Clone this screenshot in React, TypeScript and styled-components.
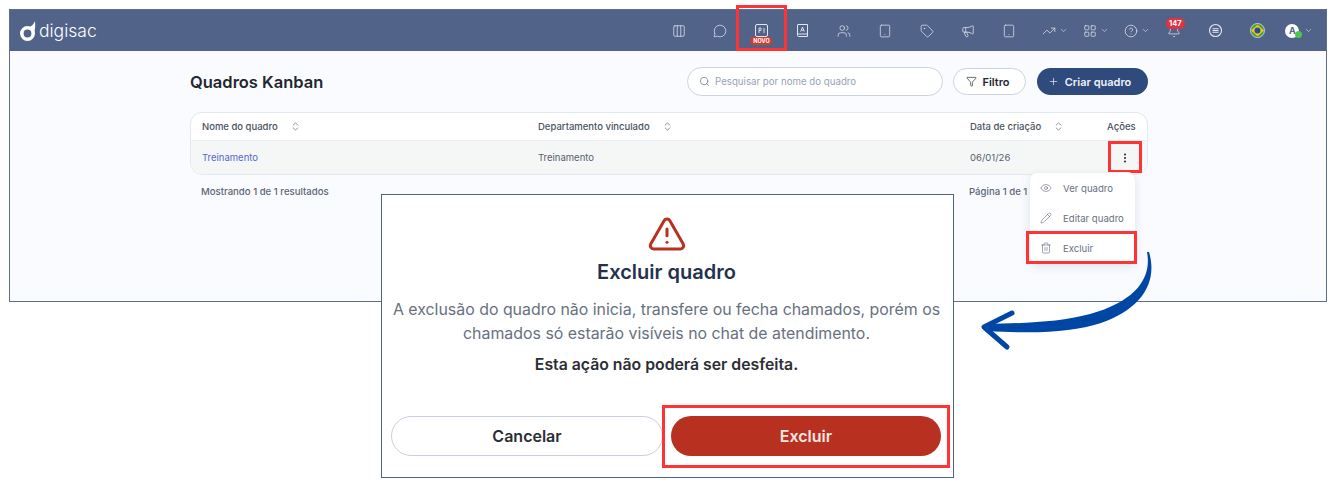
import React from 'react';
import styled, { createGlobalStyle } from 'styled-components';
import {
  Bell,
  ChevronDown,
  ChevronsUpDown,
  CircleHelp,
  Columns3,
  Eye,
  Filter,
  LayoutGrid,
  Megaphone,
  MessageCircle,
  Pencil,
  Plus,
  Search,
  Tablet,
  Tag,
  Trash2,
  TrendingUp,
  TriangleAlert,
  Users,
} from 'lucide-react';

const GlobalStyle = createGlobalStyle`
  html, body {
    margin: 0;
    padding: 0;
    background: #fff;
    font-family: Inter, "Liberation Sans", sans-serif;
  }
  * { box-sizing: border-box; }
`;

const Page = styled.div`
  position: relative;
  width: 1335px;
  height: 487px;
  padding: 9px 9px 0;
  overflow: hidden;
`;

const Frame = styled.div`
  width: 1318px;
  height: 293px;
  border: 1px solid #5d6c90;
  background: #f9fbff;
`;

// header
const Header = styled.header`
  height: 41px;
  background: #52638a;
  display: flex;
  align-items: center;
  padding: 0 7px 0 8px;
  color: #e3e7f0;
`;

const Logo = styled.div`
  display: flex;
  align-items: center;
  gap: 1px;
  color: #fff;
  padding-top: 1px;
`;

const LogoText = styled.span`
  font-size: 17.5px;
  font-weight: 300;
  line-height: 24px;
`;

const Nav = styled.nav`
  margin-left: auto;
  display: flex;
  align-items: center;
`;

const NavItem = styled.div`
  position: relative;
  width: 41.3px;
  height: 41px;
  display: flex;
  align-items: center;
  justify-content: center;
  gap: 3px;
`;

const NavChevron = styled(ChevronDown)`
  width: 9px;
  height: 9px;
  opacity: 0.8;
  margin-right: -8px;
`;

const NewBadge = styled.span`
  position: absolute;
  left: 50%;
  top: 27px;
  transform: translateX(-50%);
  width: 22px;
  height: 8px;
  border-radius: 4px;
  background: #d43b2c;
  color: #fff;
  font-size: 5.5px;
  font-weight: 700;
  line-height: 8px;
  text-align: center;
`;

const CountBadge = styled.span`
  position: absolute;
  left: 12px;
  top: 8px;
  width: 19px;
  height: 11px;
  border-radius: 6px;
  background: #e1323f;
  color: #fff;
  font-size: 7.5px;
  font-weight: 700;
  line-height: 11px;
  text-align: center;
`;

const NavHighlight = styled.div`
  position: absolute;
  left: -5px;
  right: -5px;
  top: -5px;
  bottom: 0;
  border: 3px solid #ff3333;
`;

const Avatar = styled.span`
  position: relative;
  width: 14px;
  height: 14px;
  border-radius: 50%;
  background: #fff;
  color: #52638a;
  font-size: 9px;
  font-weight: 700;
  line-height: 14px;
  text-align: center;
  margin: 0 2px 0 -6px;
`;

const OnlineDot = styled.span`
  position: absolute;
  left: 9.5px;
  top: 7.5px;
  width: 7px;
  height: 7px;
  border-radius: 50%;
  background: #4cc94c;
`;

// content
const Content = styled.main`
  width: 958px;
  margin-left: 180px;
  padding-top: 16px;
`;

const TopRow = styled.div`
  height: 29px;
  display: flex;
  align-items: center;
`;

const Title = styled.h1`
  margin: 0 auto 0 0;
  font-size: 16.5px;
  font-weight: 600;
  color: #22272f;
`;

const SearchBox = styled.div`
  width: 256px;
  height: 29px;
  border: 1px solid #ccd3de;
  border-radius: 15px;
  background: #fff;
  display: flex;
  align-items: center;
  gap: 5px;
  padding: 0 11px;
  color: #667085;
  font-size: 9.7px;
  margin-right: 10px;
`;

const Placeholder = styled.span`
  color: #98a2b3;
`;

const OutlineButton = styled.div`
  width: 73px;
  height: 27px;
  border: 1px solid #ccd3de;
  border-radius: 14px;
  background: #fff;
  display: flex;
  align-items: center;
  justify-content: center;
  gap: 5px;
  padding-right: 3px;
  color: #22272f;
  font-size: 11px;
  font-weight: 600;
  margin-right: 11px;
`;

const PrimaryButton = styled.div`
  width: 111px;
  height: 27px;
  border-radius: 14px;
  background: #2f4a7d;
  display: flex;
  align-items: center;
  justify-content: center;
  gap: 6px;
  padding-right: 6px;
  color: #eef1f7;
  font-size: 11px;
  font-weight: 600;
`;

const TableCard = styled.div`
  position: relative;
  margin-top: 16px;
  border: 1px solid #e3e7ee;
  border-radius: 12px;
  background: #fff;
`;

const TableRow = styled.div<{ $body?: boolean }>`
  display: grid;
  grid-template-columns: 336px 432px 137px 1fr;
  align-items: center;
  padding-left: 11px;
  height: ${p => (p.$body ? '34px' : '27px')};
  color: #566070;
  font-size: 9.5px;
  font-weight: ${p => (p.$body ? 400 : 500)};
  background: ${p => (p.$body ? '#f5f7f6' : 'transparent')};
  border-top: ${p => (p.$body ? '1px solid #e9edf0' : 'none')};
  border-radius: ${p => (p.$body ? '0 0 12px 12px' : '0')};
`;

const HeadCell = styled.div`
  display: flex;
  align-items: center;
  gap: 12px;
  color: #4a5260;
`;

const SortIcon = styled(ChevronsUpDown)`
  width: 11px;
  height: 11px;
  color: #7d8794;
`;

const LinkText = styled.span`
  color: #5269cf;
`;

const ActionCell = styled.div`
  position: relative;
  display: flex;
  justify-content: center;
  padding-right: 4px;
  color: #2a2f38;
`;

const KebabDots = styled.svg`
  width: 12px;
  height: 12px;
`;

const KebabHighlight = styled.div`
  position: absolute;
  left: 1px;
  top: -11px;
  width: 34px;
  height: 32px;
  border: 3px solid #ff3333;
`;

const Menu = styled.div`
  position: absolute;
  left: 838px;
  top: 59px;
  width: 107px;
  height: 91px;
  background: #fff;
  border-radius: 8px;
  border: 1px solid #eef0f4;
  box-shadow: 0 4px 10px rgba(60, 75, 110, 0.12);
  z-index: 2;
`;

const MenuItem = styled.div`
  position: relative;
  height: 30px;
  display: flex;
  align-items: center;
  gap: 11px;
  padding-left: 10px;
  color: #687180;
  font-size: 9.6px;
`;

const MenuHighlight = styled.div`
  position: absolute;
  left: -4px;
  right: -2px;
  top: -2px;
  height: 33px;
  border: 3px solid #ff3333;
`;

const Footer = styled.div`
  display: grid;
  grid-template-columns: 768px 1fr;
  padding: 11px 11px 0;
  color: #5d6675;
  font-size: 9.6px;
  font-weight: 500;
`;

// modal
const Modal = styled.section`
  position: absolute;
  left: 381px;
  top: 194px;
  width: 573px;
  height: 284px;
  background: #fff;
  border: 1px solid #52638a;
  padding: 19px 11px 0 9px;
  display: flex;
  flex-direction: column;
  align-items: center;
  z-index: 3;
`;

const AlertIcon = styled(TriangleAlert)`
  width: 40px;
  height: 40px;
  color: #b83020;
`;

const ModalTitle = styled.h2`
  margin: 4px 0 0;
  font-size: 20px;
  line-height: 28px;
  font-weight: 600;
  color: #25304d;
`;

const ModalText = styled.p`
  margin: 12px 0 0;
  width: 100%;
  font-size: 15.9px;
  line-height: 24px;
  text-align: center;
  color: #687180;
`;

const ModalWarning = styled.p`
  margin: 7px 0 0;
  font-size: 15.8px;
  line-height: 24px;
  font-weight: 600;
  color: #2b2e35;
`;

const ModalActions = styled.div`
  margin-top: auto;
  margin-bottom: 21px;
  width: 100%;
  display: grid;
  grid-template-columns: 272px 270px;
  column-gap: 8px;
`;

const CancelButton = styled.div`
  height: 40px;
  border: 1px solid #c9d0e0;
  border-radius: 20px;
  display: flex;
  align-items: center;
  justify-content: center;
  font-size: 16px;
  font-weight: 600;
  color: #2b2e35;
`;

const DangerButton = styled.div`
  position: relative;
  height: 40px;
  border-radius: 20px;
  background: #b83020;
  display: flex;
  align-items: center;
  justify-content: center;
  font-size: 16px;
  font-weight: 600;
  color: #f6e6e3;
`;

const DangerHighlight = styled.div`
  position: absolute;
  left: -9px;
  right: -9px;
  top: -11px;
  bottom: -12px;
  border: 3px solid #ff3333;
`;

const Arrow = styled.svg`
  position: absolute;
  left: 975px;
  top: 245px;
  width: 185px;
  height: 110px;
  z-index: 4;
`;

const DigisacMark = () => (
  <svg width="20" height="24" viewBox="0 0 20 24" fill="none">
    <circle cx="9.5" cy="14.5" r="5.7" stroke="#fff" strokeWidth="3.6" />
    <path d="M16.8 2c.9 4 .3 8-.9 12.6-.9-3-2.6-5-5.4-6.2C13.6 7.4 16 5.4 16.8 2Z" fill="#fff" />
  </svg>
);

const PiIcon = () => (
  <svg width="15" height="15" viewBox="0 0 15 15" fill="none" stroke="currentColor">
    <rect x="1.5" y="1.5" width="12" height="12" rx="1.5" strokeWidth="1" />
    <path d="M5 10V5h2v2.4H5M10 5v5" strokeWidth="0.9" />
  </svg>
);

const ContactBookIcon = () => (
  <svg width="15" height="15" viewBox="0 0 15 15" fill="none" stroke="currentColor" strokeWidth="1">
    <path d="M3 1.5h9.5v12H3.6A1.1 1.1 0 0 1 2.5 12.4V2a.5.5 0 0 1 .5-.5Z" />
    <path d="M2.5 11h10" />
    <path d="M5.7 8.6 7.5 4l1.8 4.6M6.3 7.2h2.4" strokeWidth="0.9" />
  </svg>
);

const ChatListIcon = () => (
  <svg width="15" height="15" viewBox="0 0 15 15" fill="none" stroke="currentColor" strokeWidth="1.1">
    <circle cx="7.5" cy="7.5" r="6" />
    <path d="M4.5 5.7h6M4.5 7.5h6M4.5 9.3h6" />
  </svg>
);

const BrazilFlag = () => (
  <svg width="15" height="15" viewBox="0 0 15 15">
    <circle cx="7.5" cy="7.5" r="7" fill="#4a9c3a" stroke="#dfe4ee" strokeWidth="0.8" />
    <path d="M7.5 1.8 14 7.5l-6.5 5.7L1 7.5Z" fill="#f2c81e" />
    <circle cx="7.5" cy="7.5" r="3" fill="#2b4a96" />
  </svg>
);

const Kebab = () => (
  <KebabDots viewBox="0 0 12 12" fill="currentColor">
    <circle cx="6" cy="2.5" r="1.05" />
    <circle cx="6" cy="6" r="1.05" />
    <circle cx="6" cy="9.5" r="1.05" />
  </KebabDots>
);

const iconSize = { size: 14, strokeWidth: 1.25 };

export default function App() {
  return (
    <>
      <GlobalStyle />
      <Page>
        <Frame>
          <Header>
            <Logo>
              <DigisacMark />
              <LogoText>digisac</LogoText>
            </Logo>
            <Nav>
              <NavItem><Columns3 {...iconSize} /></NavItem>
              <NavItem><MessageCircle {...iconSize} /></NavItem>
              <NavItem>
                <PiIcon />
                <NewBadge>NOVO</NewBadge>
                <NavHighlight />
              </NavItem>
              <NavItem><ContactBookIcon /></NavItem>
              <NavItem><Users {...iconSize} /></NavItem>
              <NavItem><Tablet {...iconSize} /></NavItem>
              <NavItem><Tag {...iconSize} /></NavItem>
              <NavItem><Megaphone {...iconSize} /></NavItem>
              <NavItem><Tablet {...iconSize} /></NavItem>
              <NavItem><TrendingUp {...iconSize} /><NavChevron /></NavItem>
              <NavItem><LayoutGrid {...iconSize} /><NavChevron /></NavItem>
              <NavItem><CircleHelp {...iconSize} /><NavChevron /></NavItem>
              <NavItem>
                <Bell {...iconSize} />
                <CountBadge>147</CountBadge>
              </NavItem>
              <NavItem><ChatListIcon /></NavItem>
              <NavItem><BrazilFlag /></NavItem>
              <NavItem>
                <Avatar>A<OnlineDot /></Avatar>
                <NavChevron />
              </NavItem>
            </Nav>
          </Header>

          <Content>
            <TopRow>
              <Title>Quadros Kanban</Title>
              <SearchBox>
                <Search size={11} strokeWidth={1.5} />
                <Placeholder>Pesquisar por nome do quadro</Placeholder>
              </SearchBox>
              <OutlineButton>
                <Filter size={11} strokeWidth={1.5} />
                Filtro
              </OutlineButton>
              <PrimaryButton>
                <Plus size={11} strokeWidth={1.5} />
                Criar quadro
              </PrimaryButton>
            </TopRow>

            <TableCard>
              <TableRow>
                <HeadCell>Nome do quadro <SortIcon /></HeadCell>
                <HeadCell>Departamento vinculado <SortIcon /></HeadCell>
                <HeadCell>Data de criação <SortIcon /></HeadCell>
                <HeadCell>Ações</HeadCell>
              </TableRow>
              <TableRow $body>
                <LinkText>Treinamento</LinkText>
                <span>Treinamento</span>
                <span>06/01/26</span>
                <ActionCell>
                  <Kebab />
                  <KebabHighlight />
                </ActionCell>
              </TableRow>
              <Menu>
                <MenuItem><Eye size={12} strokeWidth={1.25} />Ver quadro</MenuItem>
                <MenuItem><Pencil size={12} strokeWidth={1.25} />Editar quadro</MenuItem>
                <MenuItem>
                  <Trash2 size={12} strokeWidth={1.25} />Excluir
                  <MenuHighlight />
                </MenuItem>
              </Menu>
            </TableCard>

            <Footer>
              <span>Mostrando 1 de 1 resultados</span>
              <span>Página 1 de 1</span>
            </Footer>
          </Content>
        </Frame>

        <Modal>
          <AlertIcon strokeWidth={1.8} />
          <ModalTitle>Excluir quadro</ModalTitle>
          <ModalText>
            A exclusão do quadro não inicia, transfere ou fecha chamados, porém os chamados só estarão visíveis no chat de atendimento.
          </ModalText>
          <ModalWarning>Esta ação não poderá ser desfeita.</ModalWarning>
          <ModalActions>
            <CancelButton>Cancelar</CancelButton>
            <DangerButton>
              Excluir
              <DangerHighlight />
            </DangerButton>
          </ModalActions>
        </Modal>

        <Arrow viewBox="975 245 185 110">
          <path
            d="M1147 252C1152 278 1136 301 1090 314C1060 322 1030 323 985 324L986 331C1040 334 1072 332 1101 323C1142 309 1158 282 1149 252Z"
            fill="#0047a5"
          />
          <path
            d="M1012 313 984 327 1007 347"
            fill="none"
            stroke="#0047a5"
            strokeWidth="5"
            strokeLinecap="round"
            strokeLinejoin="round"
          />
        </Arrow>
      </Page>
    </>
  );
}
